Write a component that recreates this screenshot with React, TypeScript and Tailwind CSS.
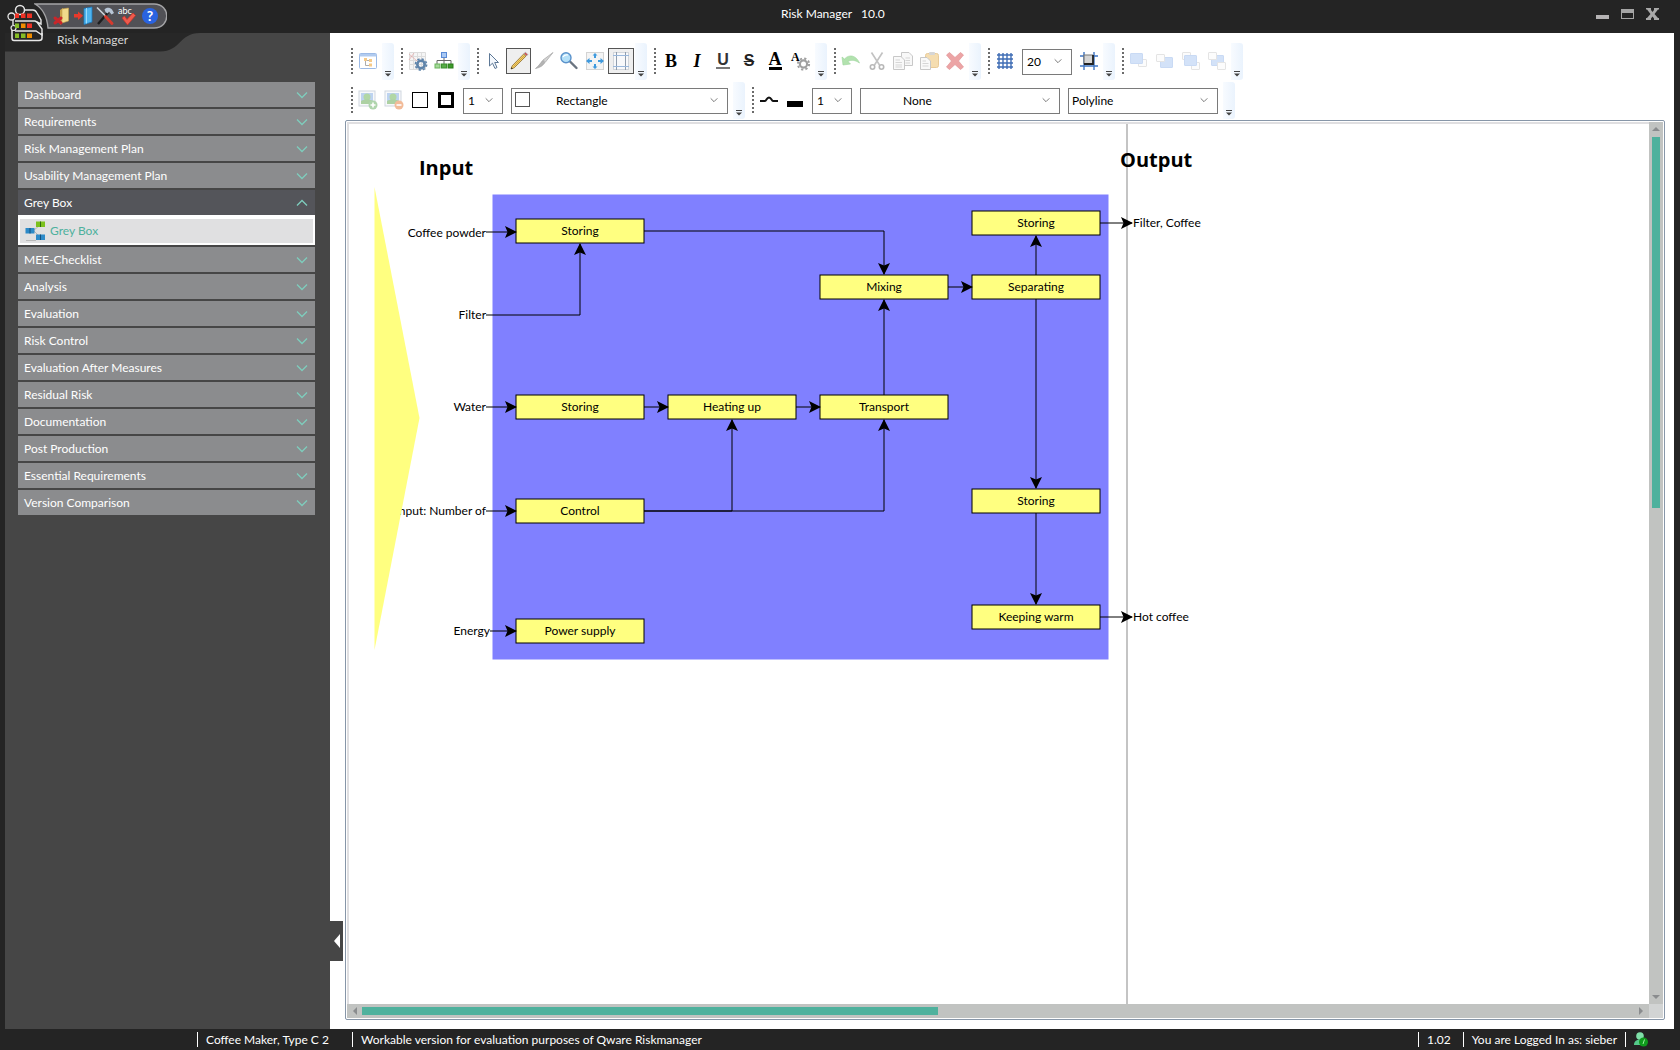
import React, { useState } from "react";
import clsx from "clsx";

const NAV_ITEMS = [
  "Dashboard",
  "Requirements",
  "Risk Management Plan",
  "Usability Management Plan",
  "Grey Box",
  "MEE-Checklist",
  "Analysis",
  "Evaluation",
  "Risk Control",
  "Evaluation After Measures",
  "Residual Risk",
  "Documentation",
  "Post Production",
  "Essential Requirements",
  "Version Comparison",
];

const NODE_W = 128;
const NODE_H = 24;

// x / y are the centre of the box
const NODES = [
  { id: "store-powder", label: "Storing", x: 231, y: 107 },
  { id: "store-out", label: "Storing", x: 687, y: 99 },
  { id: "mixing", label: "Mixing", x: 535, y: 163 },
  { id: "separating", label: "Separating", x: 687, y: 163 },
  { id: "store-water", label: "Storing", x: 231, y: 283 },
  { id: "heating", label: "Heating up", x: 383, y: 283 },
  { id: "transport", label: "Transport", x: 535, y: 283 },
  { id: "store-coffee", label: "Storing", x: 687, y: 377 },
  { id: "control", label: "Control", x: 231, y: 387 },
  { id: "power", label: "Power supply", x: 231, y: 507 },
  { id: "warm", label: "Keeping warm", x: 687, y: 493 },
];

// x is the right edge of the text
const INPUTS = [
  { label: "Coffee powder", x: 137, y: 109 },
  { label: "Filter", x: 137, y: 191 },
  { label: "Water", x: 137, y: 283 },
  { label: "Input: Number of", x: 137, y: 387 },
  { label: "Energy", x: 141, y: 507 },
];

const OUTPUTS = [
  { label: "Filter, Coffee", x: 784, y: 99 },
  { label: "Hot coffee", x: 784, y: 493 },
];

const EDGES = [
  "M137 108H167",
  "M137 191H231V120",
  "M295 107H535V150",
  "M599 163H623",
  "M687 151V112",
  "M751 99H783",
  "M687 175V364",
  "M687 389V480",
  "M751 493H783",
  "M137 283H167",
  "M295 283H319",
  "M447 283H471",
  "M535 271V176",
  "M137 387H167",
  "M295 387H383V296",
  "M295 387H535V296",
  "M141 507H167",
];

interface IconProps {
  children: React.ReactNode;
  className?: string;
}

function Icon({ children, className }: IconProps) {
  return (
    <svg viewBox="0 0 20 20" fill="none" aria-hidden="true" className={clsx("size-5 shrink-0", className)}>
      {children}
    </svg>
  );
}

function Chevron({ up, className }: { up?: boolean; className?: string }) {
  return (
    <svg viewBox="0 0 12 8" fill="none" aria-hidden="true" className={className}>
      <path d={up ? "M1 6.5L6 1.5L11 6.5" : "M1 1.5L6 6.5L11 1.5"} stroke="currentColor" strokeWidth="1.3" />
    </svg>
  );
}

interface ToolProps {
  label: string;
  active?: boolean;
  narrow?: boolean;
  disabled?: boolean;
  children: React.ReactNode;
}

function Tool({ label, active, narrow, disabled, children }: ToolProps) {
  return (
    <button
      aria-label={label}
      title={label}
      disabled={disabled}
      className={clsx(
        "flex h-[26px] shrink-0 items-center justify-center text-black",
        narrow ? "w-[25px]" : "w-[26px]",
        active && "border border-[#555] bg-[#efefef]"
      )}
    >
      {children}
    </button>
  );
}

function ToolGroup({ children }: { children: React.ReactNode }) {
  return (
    <div className="flex h-[37px]">
      <div className="flex pt-[5px]">
        <div className="mr-[2px] h-[26px] w-[2px] bg-[repeating-linear-gradient(to_bottom,#6b6b6b_0_2px,transparent_2px_4px)]" />
        {children}
      </div>
      <button
        aria-label="More"
        className="ml-px flex h-full w-3 flex-col items-center justify-end rounded-r-[3px] bg-linear-to-r from-[#f8fbff] to-[#eaf3fd] pb-[3px]"
      >
        <svg viewBox="0 0 6 6" className="size-[6px]" aria-hidden="true">
          <path d="M0 0H6V1H0Z M0 2.5H6L3 5.5Z" fill="#444" />
        </svg>
      </button>
    </div>
  );
}

interface PickerProps {
  label: string;
  value: string;
  className: string;
  pad?: string;
  swatch?: boolean;
}

function Picker({ label, value, className, pad = "pl-1", swatch }: PickerProps) {
  return (
    <div className={clsx("relative mx-1 h-[26px] shrink-0", className)}>
      <select
        aria-label={label}
        defaultValue={value}
        className={clsx("h-full w-full appearance-none border border-[#7a7a7a] bg-white text-xs text-black", pad)}
      >
        <option>{value}</option>
      </select>
      {swatch && <span className="absolute top-[5px] left-1 size-[15px] border border-[#555]" />}
      <Chevron className="pointer-events-none absolute top-[10px] right-[10px] h-[6px] w-2 text-[#666]" />
    </div>
  );
}

function PictureIcon({ remove }: { remove?: boolean }) {
  return (
    <Icon className="opacity-45">
      <rect x="1" y="1" width="16" height="15" fill="#eef2f8" stroke="#9aa7bb" />
      <rect x="3" y="3" width="12" height="11" fill="#6f9fe0" />
      <circle cx="9" cy="7" r="3.5" fill="#55a83c" />
      <path d="M3 14V11C6 9 12 9 15 11V14Z" fill="#4b9a35" />
      <circle cx="15" cy="15" r="4.5" fill={remove ? "#e46b1d" : "#4fa34a"} />
      <path d={remove ? "M12.5 15H17.5" : "M12.5 15H17.5M15 12.5V17.5"} stroke="#fff" strokeWidth="1.6" />
    </Icon>
  );
}

// sheets are painted in order: [x, y, is the highlighted one]
function OrderIcon({ sheets }: { sheets: [number, number, boolean][] }) {
  return (
    <Icon>
      {sheets.map(([x, y, blue], i) => (
        <rect
          key={i}
          x={x}
          y={y}
          width={blue ? 12 : 8}
          height={blue ? 10 : 7}
          rx="0.5"
          fill={blue ? "#d3e2f8" : "#fcfcfc"}
          stroke={blue ? "#c9daf4" : "#e4e4e4"}
        />
      ))}
    </Icon>
  );
}

function Toolbar() {
  return (
    <div className="flex flex-col gap-[2px] pt-[10px] pl-[21px]">
      <div className="flex gap-[7px]">
        <ToolGroup>
          <Tool label="Tree view">
            <Icon className="opacity-60">
              <rect x="1.5" y="2.5" width="17" height="15" rx="1" fill="#fff" stroke="#5b8dd6" />
              <path d="M1.5 3H18.5V5.5H1.5Z" fill="#7ea9e6" />
              <path d="M7.5 8V14.5H11M7.5 9.5H11" stroke="#777" />
              <rect x="6" y="7" width="3" height="3" fill="#f0a83c" />
              <rect x="11" y="8" width="3" height="3" fill="#f0a83c" />
              <rect x="11" y="12.5" width="3" height="3" fill="#f0a83c" />
            </Icon>
          </Tool>
        </ToolGroup>
        <ToolGroup>
          <Tool label="Diagram settings">
            <Icon>
              <path d="M1.5 1.5H17.5V18.5H1.5Z" fill="#f5f5f5" stroke="#dcdcdc" />
              <path d="M5.5 1V19M9.5 1V19M13.5 1V19M1 5.5H18M1 9.5H18M1 13.5H18" stroke="#ddd" />
              <path d="M1 3L9 10M1 9L6 2" stroke="#e5a6a6" strokeWidth="0.7" />
              <circle cx="13" cy="13.5" r="3.7" stroke="#5f84aa" strokeWidth="2.6" />
              <circle cx="13" cy="13.5" r="5.6" stroke="#5f84aa" strokeWidth="1.6" strokeDasharray="2.2 2.2" />
            </Icon>
          </Tool>
          <Tool label="Auto layout">
            <Icon>
              <path d="M10 6V13M3 13V9.5H17V13" stroke="#666" />
              <rect x="7.5" y="1.5" width="5" height="5" fill="#a9c9f4" stroke="#5a8bd6" />
              <rect x="1" y="13" width="5" height="4" fill="#a5d89a" stroke="#6bb55c" />
              <rect x="7.5" y="13" width="5" height="4" fill="#57ab47" stroke="#3d9130" />
              <rect x="14" y="13" width="5" height="4" fill="#3c9a2a" stroke="#2a7d1a" />
            </Icon>
          </Tool>
        </ToolGroup>
        <ToolGroup>
          <Tool label="Select" narrow>
            <Icon>
              <path d="M5.5 2.5V15L8.5 12.2L11 17.5L13 16.5L10.7 11.5H14.5Z" fill="#f4f8fd" stroke="#5d7896" strokeLinejoin="round" />
            </Icon>
          </Tool>
          <Tool label="Draw" narrow active>
            <Icon>
              <path d="M2 18L3.2 14.8L15 2.7L17.2 4.9L5.2 16.8Z" fill="#f3cf6a" stroke="#8b6a2a" strokeWidth="0.8" />
              <path d="M4.5 15.5L16 4" stroke="#c99a36" strokeWidth="0.8" />
              <path d="M15 2.5L16.5 1.2L18.8 3.5L17.5 5Z" fill="#d94b4b" stroke="#8fb0b8" strokeWidth="0.6" />
              <path d="M2 18L2.6 16.2L3.9 17.4Z" fill="#222" />
            </Icon>
          </Tool>
          <Tool label="Format brush" narrow>
            <Icon>
              <path d="M19 1.5L11.5 11L9 9Z" fill="#d4d4d4" stroke="#a4a4a4" strokeWidth="0.7" />
              <path d="M8.5 9.5L11 11.5C9 14.5 6.5 16.5 1.5 17.5C4 15.5 6 13 8.5 9.5Z" fill="#b4b4b4" stroke="#979797" strokeWidth="0.6" />
            </Icon>
          </Tool>
          <Tool label="Zoom">
            <Icon>
              <path d="M11 10.5L17.5 17" stroke="#6a7480" strokeWidth="2.4" strokeLinecap="round" />
              <circle cx="7" cy="6.8" r="5" fill="#b4e0f8" stroke="#5a92cb" strokeWidth="1.4" />
              <path d="M4 6C5 4 7 3.5 9 4" stroke="#fff" strokeWidth="1.2" />
            </Icon>
          </Tool>
          <Tool label="Fit to page">
            <Icon>
              <rect x="1.5" y="1.5" width="17" height="17" fill="#f4f4f4" stroke="#d4d4d4" />
              <path
                d="M10 2L12.5 4.5H11V7H9V4.5H7.5Z M10 18L12.5 15.5H11V13H9V15.5H7.5Z M1 10L4.5 7V9H7V11H4.5V13Z M19 10L15.5 7V9H13V11H15.5V13Z"
                fill="#3f9ade"
              />
            </Icon>
          </Tool>
          <Tool label="Page borders" active>
            <Icon>
              <rect x="2.5" y="1.5" width="15" height="17" fill="#f8f9fb" stroke="#d2d6db" />
              <path d="M5.5 1V19M14.5 1V19" stroke="#8f9dae" />
              <path d="M2 4.5H18M2 15.5H18" stroke="#9ab8dc" />
            </Icon>
          </Tool>
        </ToolGroup>
        <ToolGroup>
          <Tool label="Bold">
            <span className="font-['Liberation_Serif',serif] text-lg leading-none font-bold">B</span>
          </Tool>
          <Tool label="Italic">
            <span className="font-['Liberation_Serif',serif] text-lg leading-none font-bold italic">I</span>
          </Tool>
          <Tool label="Underline">
            <span className="border-b-2 border-[#777] px-px font-['Liberation_Sans',sans-serif] text-base leading-[14px] font-bold text-[#333]">U</span>
          </Tool>
          <Tool label="Strikethrough">
            <span className="font-['Liberation_Sans',sans-serif] text-base leading-none font-bold text-[#222] line-through">S</span>
          </Tool>
          <Tool label="Font colour">
            <span className="border-b-[3px] border-black font-['Liberation_Serif',serif] text-lg leading-[15px] font-bold">A</span>
          </Tool>
          <Tool label="Font settings">
            <span className="relative size-5">
              <span className="absolute top-0 left-0 font-['Liberation_Serif',serif] text-xs leading-none font-bold">A</span>
              <Icon className="absolute inset-0">
                <circle cx="12.5" cy="13" r="3.6" stroke="#a0a0a0" strokeWidth="2.2" />
                <circle cx="12.5" cy="13" r="5.6" stroke="#a0a0a0" strokeWidth="2" strokeDasharray="2.2 2.2" />
              </Icon>
            </span>
          </Tool>
        </ToolGroup>
        <ToolGroup>
          <Tool label="Undo" disabled>
            <Icon className="opacity-60">
              <path d="M1 6L3.5 8C8 3 15 4 18.5 12C14 9 10.5 8.5 7 10.5L9.5 13L2 14Z" fill="#7fd07a" stroke="#5db85a" strokeWidth="0.6" />
            </Icon>
          </Tool>
          <Tool label="Cut" disabled>
            <Icon className="opacity-60">
              <path d="M4.5 1.5L12.5 14M15.5 1.5L7.5 14" stroke="#9a9a9a" strokeWidth="1.6" />
              <circle cx="5.5" cy="16" r="2.2" stroke="#888" strokeWidth="1.6" />
              <circle cx="14.5" cy="16" r="2.2" stroke="#888" strokeWidth="1.6" />
            </Icon>
          </Tool>
          <Tool label="Copy" disabled>
            <Icon className="opacity-60">
              <path d="M8.5 1.5H16L19.5 5V14.5H8.5Z" fill="#f4f4f4" stroke="#a5a5a5" />
              <path d="M0.5 5.5H8L11.5 9V18.5H0.5Z" fill="#f6f6f6" stroke="#a5a5a5" />
              <path d="M2.5 9H7M2.5 11.5H9M2.5 14H9M2.5 16H9M12.5 7H17M12.5 9.5H17M12.5 12H17" stroke="#bbb" />
            </Icon>
          </Tool>
          <Tool label="Paste" disabled>
            <Icon className="opacity-60">
              <rect x="6.5" y="2.5" width="13" height="14" rx="2" fill="#f0c77c" stroke="#d9a855" />
              <rect x="10" y="1" width="6" height="3" rx="1" fill="#bbb" />
              <path d="M1.5 6.5H8L11.5 10V18.5H1.5Z" fill="#f6f6f6" stroke="#a5a5a5" />
              <path d="M3.5 10H7M3.5 12.5H9.5M3.5 15H9.5" stroke="#bbb" />
            </Icon>
          </Tool>
          <Tool label="Delete" disabled>
            <Icon className="opacity-60">
              <path
                d="M1.5 4L4.5 1.5L10 6.5L15.5 1.5L18.5 4L13.5 10L18.5 16L15.5 18.5L10 13.5L4.5 18.5L1.5 16L6.5 10Z"
                fill="#e0696b"
                stroke="#cf4d50"
                strokeWidth="0.7"
              />
            </Icon>
          </Tool>
        </ToolGroup>
        <ToolGroup>
          <Tool label="Show grid">
            <Icon>
              <path d="M4 2V18M8 2V18M12 2V18M16 2V18M2 4H18M2 8H18M2 12H18M2 16H18" stroke="#3f6db5" strokeWidth="1.4" />
            </Icon>
          </Tool>
          <Picker label="Grid size" value="20" className="w-[50px]" />
          <Tool label="Snap to grid">
            <Icon>
              <path d="M5 1V19M15 1V19M1 5H19M1 15H19" stroke="#3f76c4" strokeWidth="1.4" />
              <rect x="5" y="4" width="9" height="9" fill="#d4d4d4" />
              <path d="M5 13V4H14" stroke="#777" strokeWidth="1.2" />
              <path d="M14 4V13H5" stroke="#222" strokeWidth="1.8" />
            </Icon>
          </Tool>
        </ToolGroup>
        <ToolGroup>
          <Tool label="Bring to front" disabled>
            <OrderIcon sheets={[[9.5, 8.5, false], [1.5, 2.5, true]]} />
          </Tool>
          <Tool label="Send to back" disabled>
            <OrderIcon sheets={[[5.5, 6.5, true], [1.5, 3.5, false]]} />
          </Tool>
          <Tool label="Bring forward" disabled>
            <OrderIcon sheets={[[1.5, 1.5, false], [10.5, 11.5, false], [3.5, 4.5, true]]} />
          </Tool>
          <Tool label="Send backward" disabled>
            <OrderIcon sheets={[[4.5, 4.5, true], [1.5, 1.5, false], [10.5, 11.5, false]]} />
          </Tool>
        </ToolGroup>
      </div>

      <div className="flex gap-[7px]">
        <ToolGroup>
          <Tool label="Add picture" disabled>
            <PictureIcon />
          </Tool>
          <Tool label="Remove picture" disabled>
            <PictureIcon remove />
          </Tool>
          <Tool label="Fill colour">
            <span className="size-4 border border-black" />
          </Tool>
          <Tool label="Border colour">
            <span className="size-4 border-[3px] border-black" />
          </Tool>
          <Picker label="Border width" value="1" className="w-10" />
          <Picker label="Shape" value="Rectangle" className="w-[217px]" pad="pl-11" swatch />
        </ToolGroup>
        <ToolGroup>
          <Tool label="Line style">
            <Icon>
              <path d="M1 11H6C7.5 11 7.5 7.5 10 7.5S12.5 11 14 11H19" stroke="#111" strokeWidth="2" />
            </Icon>
          </Tool>
          <Tool label="Line colour">
            <span className="mt-2 h-[6px] w-4 bg-black" />
          </Tool>
          <Picker label="Line width" value="1" className="w-10" />
          <Picker label="Line end" value="None" className="w-[200px]" pad="pl-[42px]" />
          <Picker label="Line type" value="Polyline" className="w-[150px]" pad="pl-[3px]" />
        </ToolGroup>
      </div>
    </div>
  );
}

function Diagram() {
  return (
    <div className="relative min-w-0 flex-1 overflow-hidden bg-white text-xs leading-4 text-black">
      <div className="absolute inset-y-0 left-[777px] w-[2px] bg-[#c4c4c4]" />
      {INPUTS.map((input) => (
        <span
          key={input.label}
          className="absolute -translate-x-full -translate-y-1/2 whitespace-nowrap"
          style={{ left: input.x, top: input.y }}
        >
          {input.label}
        </span>
      ))}
      <svg width="860" height="560" className="absolute top-0 left-0" aria-hidden="true">
        <defs>
          <marker id="arrow" markerUnits="userSpaceOnUse" markerWidth="14" markerHeight="14" refX="11" refY="6" orient="auto">
            <path d="M0 0L12 6L0 12L2.5 6Z" fill="#000" />
          </marker>
        </defs>
        <path d="M25.5 63V526L70.5 294Z" fill="#ffff80" />
        <rect x="144" y="71" width="615" height="464" fill="#8080ff" stroke="#8080ff" />
        {NODES.map((node) => (
          <rect
            key={node.id}
            x={node.x - NODE_W / 2}
            y={node.y - NODE_H / 2}
            width={NODE_W}
            height={NODE_H}
            fill="#ffff80"
            stroke="#000"
          />
        ))}
        {EDGES.map((d) => (
          <path key={d} d={d} fill="none" stroke="#000" markerEnd="url(#arrow)" />
        ))}
      </svg>
      {NODES.map((node) => (
        <span
          key={node.id}
          className="absolute -translate-x-1/2 -translate-y-1/2 whitespace-nowrap"
          style={{ left: node.x, top: node.y }}
        >
          {node.label}
        </span>
      ))}
      {OUTPUTS.map((output) => (
        <span
          key={output.label}
          className="absolute -translate-y-1/2 whitespace-nowrap"
          style={{ left: output.x, top: output.y }}
        >
          {output.label}
        </span>
      ))}
      <h2 className="absolute top-[30px] left-[70px] font-['Open_Sans',sans-serif] text-xl leading-7 font-bold">Input</h2>
      <h2 className="absolute top-[22px] left-[771px] font-['Open_Sans',sans-serif] text-xl leading-7 font-bold">Output</h2>
    </div>
  );
}

function ScrollArrow({ d }: { d: string }) {
  return (
    <svg viewBox="0 0 8 8" className="size-2 shrink-0" aria-hidden="true">
      <path d={d} fill="#8a8c8e" />
    </svg>
  );
}

function Workspace() {
  return (
    <div className="mt-px mr-[9px] mb-[9px] ml-[15px] flex min-h-0 flex-1 flex-col rounded-[2px] border border-[#8796a8] p-px">
      <div className="flex min-h-0 flex-1">
        <div className="flex min-w-0 flex-1 border-t-2 border-l-2 border-[#e0dfe1]">
          <Diagram />
        </div>
        <div className="flex w-[14px] flex-col items-center justify-between bg-[#c1c3c1] py-[3px]">
          <ScrollArrow d="M0 6L4 2L8 6Z" />
          <div className="my-1 w-2 flex-1">
            <div className="h-[43.5%] bg-[#4eb19d]" />
          </div>
          <ScrollArrow d="M0 2L4 6L8 2Z" />
        </div>
      </div>
      <div className="flex h-[14px] bg-[#c1c3c1]">
        <div className="flex flex-1 items-center pl-1">
          <ScrollArrow d="M6 0L2 4L6 8Z" />
          <div className="mx-[3px] h-2 flex-1">
            <div className="h-full w-[45.3%] bg-[#4eb19d]" />
          </div>
          <ScrollArrow d="M2 0L6 4L2 8Z" />
          <span className="w-1" />
        </div>
        <div className="w-[14px] bg-[#d2d4d4]" />
      </div>
    </div>
  );
}

function Logo() {
  return (
    <svg viewBox="0 0 36 38" fill="none" className="absolute top-1 left-[7px] h-[38px] w-9" aria-hidden="true">
      <path d="M5 8H26L35 22V34C35 36 34 37 32 37H8C5 37 4 36 4 34V24L8 17Z" fill="#262626" />
      <path d="M17 6H26C28 6 29 7 30 9L34 16V20L28 17H8" stroke="#e8e8e8" strokeWidth="1.4" />
      <path d="M30 18L35 25V31L29 27H8M6 15V21" stroke="#e8e8e8" strokeWidth="1.4" />
      <path d="M5 26V34C5 36 6 36.5 7 36.5H32C34 36.5 35 36 35 34V29" stroke="#e8e8e8" strokeWidth="1.5" />
      <circle cx="13" cy="6" r="4.5" fill="#262626" stroke="#e8e8e8" strokeWidth="1.5" />
      <circle cx="4.5" cy="12.5" r="3.5" fill="#262626" stroke="#e8e8e8" strokeWidth="1.3" />
      <circle cx="6.5" cy="24" r="2.5" fill="#262626" stroke="#e8e8e8" strokeWidth="1.2" />
      <path d="M8 9.5H12V14H8ZM14 9.5H18.5V14H14ZM20 9.5H25V14H20Z" fill="#ee3124" />
      <path d="M8 19.5H12V24H8Z" fill="#86bc25" />
      <path d="M14 19.5H18.5V24H14Z" fill="#f08c00" />
      <path d="M20 19.5H25V24H20Z" fill="#ee3124" />
      <path d="M8 29.5H12V34H8ZM14 29.5H18.5V34H14Z" fill="#86bc25" />
      <path d="M20 29.5H25V34H20Z" fill="#f08c00" />
    </svg>
  );
}

function QuickAccess() {
  return (
    <div className="relative ml-[34px] flex h-[26px] w-[133px] items-center">
      <svg viewBox="0 0 133 26" fill="none" className="absolute inset-0" aria-hidden="true">
        <path d="M1 1H120C137 1 137 25 120 25H14C13 14 10 6 1 1Z" fill="#515156" stroke="#a4a4a6" strokeWidth="1.4" />
      </svg>
      <div className="relative flex gap-[2px] pl-[17px]">
        <button aria-label="Close project">
          <Icon>
            <path d="M9 4L12 2V16L9 19Z" fill="#c9a24a" />
            <path d="M11 3L17.5 2V15L11 17Z" fill="#f1d98a" stroke="#c7a24c" strokeWidth="0.6" />
            <path d="M4 12L10 17M10 12L4 17" stroke="#c8262a" strokeWidth="3" strokeLinecap="round" />
          </Icon>
        </button>
        <button aria-label="Exit">
          <Icon>
            <path d="M11 2.5L19 1V16L11 18.5Z" fill="#4fb4ee" stroke="#1c78bd" strokeWidth="0.8" />
            <path d="M13.5 2V17.5" stroke="#9adcff" />
            <path d="M1 8H5V5.5L10 9.8L5 14V11.5H1Z" fill="#e8392b" />
          </Icon>
        </button>
        <button aria-label="Options">
          <Icon>
            <path d="M3 18L13 6.5" stroke="#1d1d1d" strokeWidth="2.4" />
            <path d="M9.5 3.5C11 1 15 1 17 3.5L19 7L16.5 8.5L14 5.5L12.5 7.5L10.5 6Z" fill="#b8c6d6" />
            <path d="M2 1.5L10.5 10" stroke="#cfd4da" strokeWidth="1.6" />
            <path d="M10.5 10.5L17 17.5" stroke="#d53a2e" strokeWidth="3" strokeLinecap="round" />
          </Icon>
        </button>
        <button aria-label="Spell check" className="relative">
          <Icon>
            <path d="M5 12L7.5 10L10 13.5L16 7L18.5 9.5L10.5 19Z" fill="#ee5a4c" stroke="#c92f26" strokeWidth="0.7" />
          </Icon>
          <span className="absolute top-0 left-px text-[9px] leading-[10px] text-white">abc</span>
        </button>
        <button
          aria-label="Help"
          className="my-[2px] ml-[3px] flex size-4 items-center justify-center rounded-full bg-[#2a63e0] text-sm leading-none font-bold text-white"
        >
          ?
        </button>
      </div>
    </div>
  );
}

function TitleBar() {
  return (
    <header className="relative z-10 flex h-[33px] shrink-0 items-start justify-between pt-[3px] pr-[21px]">
      <QuickAccess />
      <Logo />
      <h1 className="absolute top-[6px] left-1/2 -translate-x-[59px] text-xs leading-4 whitespace-pre text-white">
        {"Risk Manager   10.0"}
      </h1>
      <div className="flex items-center gap-3 pt-[5px]">
        <button aria-label="Minimize" className="flex h-3 w-[13px] items-end pb-px">
          <span className="h-1 w-full bg-[#b5b3b4]" />
        </button>
        <button aria-label="Maximize" className="h-[10px] w-[13px] border border-t-4 border-[#a5a5a5]" />
        <button aria-label="Close" className="h-3 w-[13px]">
          <svg viewBox="0 0 13 12" className="h-3 w-[13px]" aria-hidden="true">
            <path d="M0 0H5V2L6.5 4L8 2V0H13V1.5H12L8.5 6L12 10H13V12H8V10.5L6.5 8.5L5 10.5V12H0V10H1L4.5 6L1 1.5H0Z" fill="#aaa" />
          </svg>
        </button>
      </div>
    </header>
  );
}

function Sidebar() {
  const [open, setOpen] = useState("Grey Box");

  return (
    <aside className="ml-[5px] w-[325px] shrink-0 bg-[#464646]">
      <div className="relative h-[19px]">
        <svg viewBox="0 0 325 19" className="absolute inset-0" aria-hidden="true">
          <path d="M0 0H195C174 0 176 18.5 155 18.5H0Z" fill="#272727" />
        </svg>
        <p className="relative pl-[52px] text-xs leading-[14px] text-[#d6d6d6]">Risk Manager</p>
      </div>
      <nav className="flex flex-col gap-[2px] pt-[30px] pr-[15px] pl-[13px] text-xs text-white">
        {NAV_ITEMS.map((item) => {
          const expanded = item === open;
          return (
            <div key={item}>
              <button
                aria-expanded={expanded}
                onClick={() => setOpen(expanded ? "" : item)}
                className={clsx(
                  "flex h-[25px] w-full items-center justify-between pr-[7px] pl-[6px]",
                  expanded ? "bg-[#54555a]" : "bg-[#8b8c8e]"
                )}
              >
                <span>{item}</span>
                <Chevron up={expanded} className="h-2 w-3 text-[#7ecdbd]" />
              </button>
              {expanded && item === "Grey Box" && (
                <a
                  href="#grey-box"
                  className="flex h-[30px] items-center gap-[5px] border-2 border-t-4 border-white bg-[#e0e0e1] pl-[5px] text-[#4eb19d]"
                >
                  <Icon>
                    <path d="M9 9L14 5M9 10L14 15" stroke="#b5b5b5" />
                    <rect x="11" y="0.5" width="9" height="5.5" fill="#7cc11e" />
                    <rect x="0.5" y="7" width="9" height="5.5" fill="#2d8ac8" />
                    <rect x="11" y="13.5" width="9" height="5.5" fill="#2d8ac8" />
                    <path d="M15.5 0.5V6" stroke="#2f6b10" />
                    <path d="M5 7V12.5M15.5 13.5V19" stroke="#14507e" />
                    <path d="M1 19.5H11" stroke="#b9b9b9" />
                  </Icon>
                  Grey Box
                </a>
              )}
            </div>
          );
        })}
      </nav>
    </aside>
  );
}

function StatusBar() {
  return (
    <footer className="flex h-[21px] shrink-0 items-center justify-between pl-[197px] text-xs leading-none text-white">
      <div className="flex items-center">
        <span className="w-[155px] border-l border-white pl-2 leading-[15px] whitespace-nowrap">Coffee Maker, Type C 2</span>
        <span className="border-l border-white pl-2 leading-[15px]">Workable version for evaluation purposes of Qware Riskmanager</span>
      </div>
      <div className="flex items-center pr-8">
        <span className="border-l border-white pr-3 pl-2 leading-[15px]">1.02</span>
        <span className="border-l border-white px-2 leading-[15px]">You are Logged In as: sieber</span>
        <span className="flex h-[15px] items-center border-l border-white pl-2">
          <svg viewBox="0 0 14 15" className="h-[15px] w-[14px]" aria-hidden="true">
            <circle cx="6" cy="4" r="3.8" fill="#7fe0a8" />
            <path d="M0 13C0 9 3 7.5 6 7.5S11 9 11 13Z" fill="#55c98a" />
            <circle cx="9.5" cy="10" r="4.5" fill="#0f9a1c" />
            <path d="M9 12L10.5 7.5" stroke="#9df0a0" />
          </svg>
        </span>
      </div>
    </footer>
  );
}

export default function App() {
  return (
    <div className="flex h-screen flex-col overflow-hidden bg-[#242424] font-['Lato','Open_Sans',sans-serif]">
      <TitleBar />
      <div className="flex min-h-0 flex-1 pr-[6px]">
        <Sidebar />
        <main className="relative flex min-w-0 flex-1 flex-col bg-white">
          <Toolbar />
          <Workspace />
          <button aria-label="Collapse sidebar" className="absolute bottom-[68px] left-0 flex h-10 w-[13px] items-center justify-center bg-[#464646]">
            <svg viewBox="0 0 6 14" className="h-[14px] w-[6px]" aria-hidden="true">
              <path d="M6 0V14L0 7Z" fill="#fff" />
            </svg>
          </button>
        </main>
      </div>
      <StatusBar />
    </div>
  );
}
